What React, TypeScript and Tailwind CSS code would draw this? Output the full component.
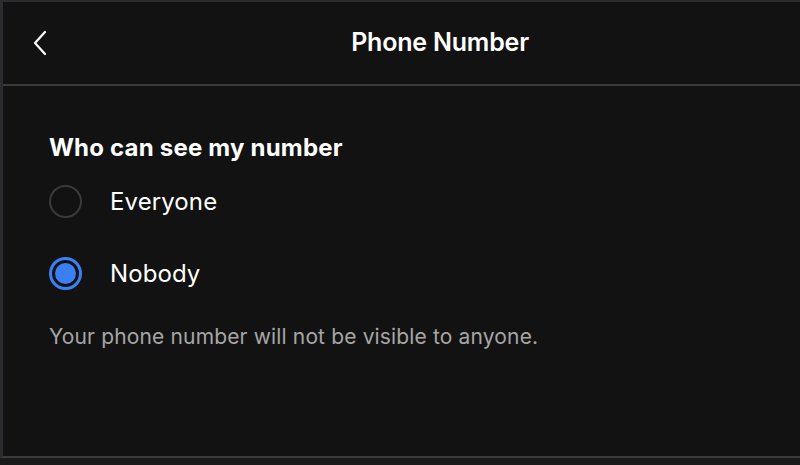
import { useState } from 'react';

const options = [
    { id: 'everyone', label: 'Everyone' },
    { id: 'nobody', label: 'Nobody' },
];

const App = () => {
    const [choice, setChoice] = useState('nobody');

    return (
        <div className="w-[800px] h-[465px] bg-[#1a1a1a] font-['Inter',sans-serif] text-white overflow-hidden">
            <div className="h-[458px] bg-[#121212] border-l-[3px] border-t-2 border-[#2c2c2e] border-b-2 border-b-[#3a3a3a] flex flex-col">
                {/* Header */}
                <div className="h-[84px] flex items-center border-b-2 border-[#3a3a3a]">
                    <button className="w-[40px] h-[40px] ml-[17px] flex items-center justify-center text-white">
                        <svg width="16" height="26" viewBox="0 0 16 26" fill="none" stroke="currentColor" strokeWidth="2.2" strokeLinecap="round" strokeLinejoin="round">
                            <path d="M13 2 L3 13 L13 24" />
                        </svg>
                    </button>
                    <h1 className="flex-1 text-center pl-[80px] text-[25px] font-semibold tracking-[-0.2px]">Phone Number</h1>
                    <div className="w-[40px] mr-[20px]" />
                </div>

                {/* Body */}
                <div className="pl-[46px] pt-[47px]">
                    <h2 className="text-[24px] font-bold leading-[30px] tracking-[0.2px]">Who can see my number</h2>
                    <div className="mt-[22px] flex flex-col gap-[39px]">
                        {options.map((opt) => (
                            <label key={opt.id} onClick={() => setChoice(opt.id)} className="flex items-center gap-[28px] cursor-pointer">
                                {choice === opt.id ? (
                                    <span className="w-[33px] h-[33px] rounded-full border-[3px] border-[#3b7ff5] flex items-center justify-center">
                                        <span className="w-[21px] h-[21px] rounded-full bg-[#3b7ff5]" />
                                    </span>
                                ) : (
                                    <span className="w-[33px] h-[33px] rounded-full border-2 border-[#3a3a3a]" />
                                )}
                                <span className="text-[24px] leading-[30px] tracking-[0.1px]">{opt.label}</span>
                            </label>
                        ))}
                    </div>
                    <p className="mt-[33px] text-[21px] text-[#a6a6a6] leading-[28px] tracking-[0.15px]">Your phone number will not be visible to anyone.</p>
                </div>
            </div>
        </div>
    );
};

export default App;
